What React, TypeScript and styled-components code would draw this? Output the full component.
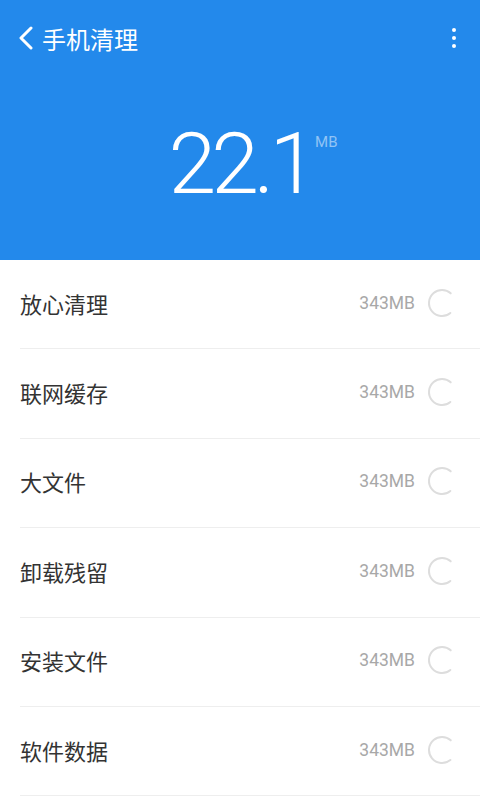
import React from "react";
import styled, { createGlobalStyle } from "styled-components";

const colors = {
  blue: "#2389EB",
  white: "#FFFFFF",
  text: "#333333",
  muted: "#A8A8A8",
  line: "#EEEEEE",
  ring: "#DDDDDD",
};

const GlobalStyle = createGlobalStyle`
  html, body {
    margin: 0;
    padding: 0;
    background: #fff;
  }
  body {
    font-family: Roboto, "Noto Sans CJK SC", sans-serif;
  }
`;

const Page = styled.div`
  width: 480px;
  min-height: 800px;
  background: #fff;
  overflow: hidden;
`;

const Header = styled.header`
  height: 260px;
  background-color: ${colors.blue};
  display: flex;
  flex-direction: column;
`;

const TopBar = styled.div`
  height: 76px;
  display: flex;
  align-items: center;
  padding: 0 24px 0 18px;
`;

const BackButton = styled.button`
  border: 0;
  background: none;
  padding: 0;
  width: 22px;
  height: 28px;
  display: flex;
  align-items: center;
  cursor: pointer;
`;

const Title = styled.h1`
  margin: 0 0 0 2px;
  flex: 1;
  font-family: Roboto, "Noto Sans CJK SC", sans-serif;
  font-size: 24px;
  font-weight: 400;
  color: ${colors.white};
`;

const MoreButton = styled.button`
  border: 0;
  background: none;
  padding: 0;
  display: flex;
  flex-direction: column;
  gap: 4px;
  align-items: center;
  cursor: pointer;
`;

const Dot = styled.span`
  width: 4px;
  height: 4px;
  border-radius: 50%;
  background: ${colors.white};
`;

const Summary = styled.div`
  flex: 1;
  display: flex;
  justify-content: center;
  align-items: flex-start;
  padding-top: 45px;
  padding-left: 26px;
`;

const Amount = styled.span`
  font-family: Roboto, sans-serif;
  font-weight: 300;
  font-size: 86px;
  line-height: 1;
  color: ${colors.white};
  letter-spacing: -5px;
`;

const Unit = styled.span`
  font-family: Roboto, sans-serif;
  font-size: 15px;
  color: rgba(255, 255, 255, 0.5);
  margin: 12px 0 0 3px;
`;

const List = styled.ul`
  list-style: none;
  margin: 0;
  padding: 0 0 0 20px;
`;

const Row = styled.li`
  box-sizing: border-box;
  height: 89.4px;
  display: flex;
  align-items: center;
  border-bottom: 1px solid ${colors.line};
  padding: 0 23px 3px 0;
`;

const Label = styled.span`
  flex: 1;
  font-family: "Noto Sans CJK SC", sans-serif;
  font-size: 22px;
  color: ${colors.text};
`;

const Size = styled.span`
  font-family: Roboto, sans-serif;
  font-size: 17.5px;
  color: ${colors.muted};
  margin-right: 12px;
`;

const Spinner = () => (
  <svg width="30" height="30" viewBox="0 0 30 30">
    <circle
      cx="15"
      cy="15"
      r="13"
      fill="none"
      stroke={colors.ring}
      strokeWidth="2"
      strokeLinecap="round"
      strokeDasharray="59 82"
      transform="rotate(50 15 15)"
    />
  </svg>
);

const items = ["放心清理", "联网缓存", "大文件", "卸载残留", "安装文件", "软件数据"];

const App = () => {
  return (
    <Page>
      <GlobalStyle />
      <Header>
        <TopBar>
          <BackButton aria-label="back">
            <svg width="16" height="24" viewBox="0 0 16 24">
              <path
                d="M13 2 L3 12 L13 22"
                fill="none"
                stroke={colors.white}
                strokeWidth="3"
                strokeLinecap="round"
                strokeLinejoin="round"
              />
            </svg>
          </BackButton>
          <Title>手机清理</Title>
          <MoreButton aria-label="more">
            <Dot />
            <Dot />
            <Dot />
          </MoreButton>
        </TopBar>
        <Summary>
          <Amount>22.1</Amount>
          <Unit>MB</Unit>
        </Summary>
      </Header>
      <List>
        {items.map((name) => (
          <Row key={name}>
            <Label>{name}</Label>
            <Size>343MB</Size>
            <Spinner />
          </Row>
        ))}
      </List>
    </Page>
  );
};

export default App;
